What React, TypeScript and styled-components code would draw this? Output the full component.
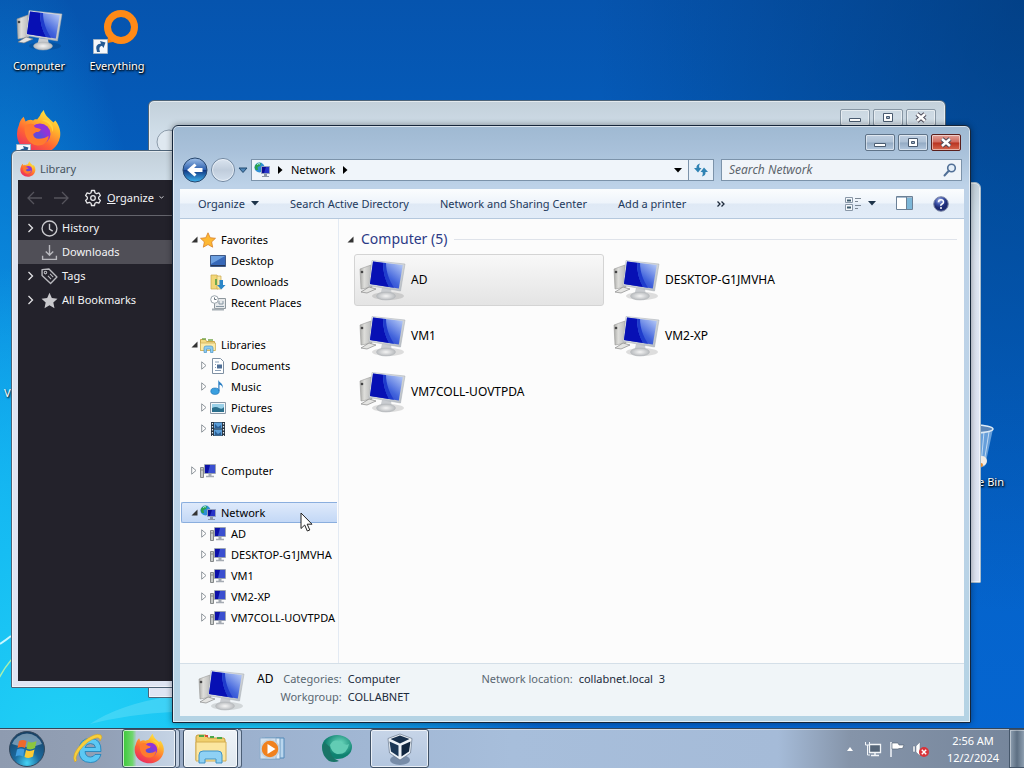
import React from "react";
import styled, { createGlobalStyle, css } from "styled-components";

const Global = createGlobalStyle`
  * { box-sizing: border-box; }
  html, body, #root { margin: 0; height: 100%; }
  body { font-family: "Noto Sans", "Open Sans", sans-serif; font-size: 12px; line-height: 16px; color: #000; overflow: hidden; }
  button { font: inherit; color: inherit; border: 0; background: none; padding: 0; }
  svg { display: block; flex: none; }
  ul, dl { margin: 0; padding: 0; list-style: none; }
`;

/* ---------- desktop ---------- */

const Screen = styled.main`
  display: flex;
  flex-direction: column;
  height: 100%;
  background:
    radial-gradient(ellipse 46% 66% at 7% 100%, #22d3f6 0%, #16bdf3 45%, rgba(14, 140, 230, 0) 100%),
    radial-gradient(ellipse 16% 75% at 0% 68%, #0ea4ee 0%, rgba(14, 140, 230, 0) 100%),
    radial-gradient(ellipse 42% 80% at 100% 0%, rgba(0, 52, 110, 0.6) 0%, rgba(0, 50, 120, 0) 100%),
    linear-gradient(180deg, #0654ae 0%, #045ebe 24%, #0462c8 60%, #0566d2 100%);
`;

const Canvas = styled.section`
  position: relative;
  flex: 1;
  min-height: 0;
  overflow: hidden;
`;

const Wallpaper = styled.svg`
  position: absolute;
  left: 0;
  bottom: 0;
`;

const Shortcuts = styled.div`
  display: grid;
  grid-template-columns: 78px 78px;
  grid-auto-rows: 100px;
`;

const Shortcut = styled.button`
  display: flex;
  flex-direction: column;
  align-items: center;
  padding-top: 6px;
  gap: 4px;
  color: #fff;
  font-size: 11px;
  text-shadow: 1px 1px 2px #000, 0 1px 2px #000;
`;

const BinSpot = styled.div`
  position: absolute;
  right: 4px;
  top: 414px;
  display: grid;
  width: 90px;
`;

const EdgeLabel = styled.span`
  position: absolute;
  left: 4px;
  top: 385px;
  color: #fff;
  font-size: 11px;
  text-shadow: 1px 1px 2px #000;
`;

/* ---------- windows ---------- */

const Window = styled.section<{ $active?: boolean }>`
  position: absolute;
  display: flex;
  flex-direction: column;
  border: 1px solid ${(p) => (p.$active ? "#16263a" : "#4d6377")};
  border-radius: 6px 6px 1px 1px;
  background: ${(p) =>
    p.$active
      ? "linear-gradient(180deg, #9fb9d2 0, #a9c1da 26px, #bdd2e8 60px, #bcd3e8 60%, #b4d3e4 100%)"
      : "linear-gradient(180deg, #c3d0da 0, #cfdde8 30px, #dde4f1 80px, #dfe5f3 100%)"};
  box-shadow: inset 0 0 0 1px rgba(255, 255, 255, 0.55);
`;

const BackWindow = styled(Window)`
  left: 148px;
  right: 78px;
  top: 100px;
  bottom: 30px;
`;

const SideWindow = styled(Window)`
  left: 320px;
  right: 43px;
  top: 182px;
  bottom: 145px;
  border-color: #a9bccb;
`;

const LibraryWindow = styled(Window)`
  left: 11px;
  right: 420px;
  top: 150px;
  bottom: 40px;
  padding: 0 6px 6px;
`;

const ExplorerWindow = styled(Window)`
  left: 172px;
  right: 53px;
  top: 125px;
  bottom: 5px;
  padding: 0 6px 6px 7px;
  box-shadow: inset 0 0 0 1px rgba(255, 255, 255, 0.6), 0 0 6px rgba(0, 0, 0, 0.4);
`;

const Captions = styled.div<{ $dim?: boolean }>`
  display: flex;
  justify-content: flex-end;
  gap: 3px;
  padding: 8px ${(p) => (p.$dim ? 9 : 3)}px 0 0;
`;

const CaptionButton = styled.button<{ $close?: boolean; $dim?: boolean }>`
  display: grid;
  place-items: center;
  width: 30px;
  height: 17px;
  border: 1px solid #5f7388;
  border-radius: 2px;
  box-shadow: inset 0 0 0 1px rgba(255, 255, 255, 0.5);
  background: linear-gradient(180deg, #c0d0e2 0%, #adc0d5 48%, #93aac3 52%, #b3c8df 100%);
  ${(p) =>
    p.$close &&
    css`
      border-color: #5a1f1c;
      background: linear-gradient(180deg, #e2a097 0%, #d0695c 48%, #b8321f 52%, #d6684f 100%);
    `}
  ${(p) =>
    p.$dim &&
    css`
      border-color: #8796a4;
      background: rgba(255, 255, 255, 0.1);
    `}
`;

/* ---------- library window ---------- */

const LibraryTitle = styled.h2`
  display: flex;
  align-items: center;
  gap: 4px;
  height: 29px;
  margin: 0;
  padding: 7px 2px 0;
  font-size: 11px;
  font-weight: 400;
  color: #46545f;
`;

const LibraryBody = styled.div`
  flex: 1;
  background: #23222b;
  color: #f4f4f6;
  font-size: 11px;
`;

const LibraryBar = styled.div`
  display: flex;
  align-items: center;
  gap: 8px;
  height: 36px;
  padding: 0 8px;
  border-bottom: 1px solid #64646c;
`;

const OrganizeButton = styled.button`
  display: flex;
  align-items: center;
  gap: 5px;
  margin-left: 6px;
`;

const LibraryRow = styled.li<{ $selected?: boolean }>`
  display: flex;
  align-items: center;
  gap: 4px;
  height: 24px;
  padding-left: 8px;
  background: ${(p) => (p.$selected ? "#504f57" : "transparent")};
`;

const LibraryToggle = styled.span`
  width: 11px;
`;

/* ---------- explorer ---------- */

const AddressRow = styled.div`
  display: flex;
  align-items: center;
  height: 24px;
  margin: 7px 2px 7px 0;
`;

const NavCluster = styled.div`
  display: flex;
  align-items: center;
  gap: 2px;
  width: 71px;
  padding-left: 2px;
`;

const AddressBox = styled.div`
  display: flex;
  align-items: center;
  flex: 1;
  height: 22px;
  padding-left: 2px;
  background: #f0f5fa;
  border: 1px solid #7c93aa;
  font-size: 11px;
`;

const Crumb = styled.button`
  display: flex;
  align-items: center;
  gap: 8px;
  padding-left: 8px;
`;

const AddressDrop = styled.button`
  display: grid;
  place-items: center;
  width: 20px;
  height: 20px;
  margin-left: auto;
`;

const RefreshButton = styled.button`
  display: grid;
  place-items: center;
  width: 25px;
  height: 22px;
  border: 1px solid #7c93aa;
  border-left: 0;
  background: #e7f0f9;
`;

const SearchBox = styled.label`
  display: flex;
  align-items: center;
  width: 241px;
  height: 22px;
  margin-left: 7px;
  padding: 0 4px 0 7px;
  border: 1px solid #7c93aa;
  background: #f0f4f9;
`;

const SearchInput = styled.input`
  flex: 1;
  min-width: 0;
  border: 0;
  padding: 0;
  background: none;
  font: italic 12px/16px "Noto Sans", "Open Sans", sans-serif;
  &::placeholder { color: #5c646c; opacity: 1; }
`;

const Toolbar = styled.div`
  display: flex;
  align-items: center;
  gap: 31px;
  height: 30px;
  padding: 0 15px 0 18px;
  font-size: 11px;
  color: #1e395b;
  background: linear-gradient(180deg, #fbfdfe 0%, #eef4fb 48%, #dfe9f5 52%, #e2ecf8 100%);
  border-bottom: 1px solid #b5c8dd;
`;

const ToolButton = styled.button`
  display: flex;
  align-items: center;
  gap: 6px;
  white-space: nowrap;
`;

const ToolIcons = styled.div`
  display: flex;
  align-items: center;
  gap: 20px;
  margin-left: auto;
`;

const Panes = styled.div`
  display: flex;
  flex: 1;
  min-height: 0;
  background: #fcfcfc;
`;

const Tree = styled.nav`
  display: flex;
  flex-direction: column;
  gap: 21px;
  width: 159px;
  padding: 10px 1px 0;
  border-right: 1px solid #e3eaf3;
  font-size: 11px;
  overflow: hidden;
`;

const TreeRow = styled.li<{ $level?: number; $selected?: boolean }>`
  display: flex;
  align-items: center;
  gap: 4px;
  height: 21px;
  padding-left: ${(p) => (p.$level ? 18 : 8)}px;
  white-space: nowrap;
  border: 1px solid transparent;
  ${(p) =>
    p.$selected &&
    css`
      border-color: #8aaede;
      border-right: 0;
      border-radius: 2px 0 0 2px;
      background: linear-gradient(180deg, #dfeafb 0%, #c3d8f6 100%);
    `}
`;

const TreeToggle = styled.span`
  display: grid;
  place-items: center;
  flex: none;
  width: 8px;
  margin-right: -2px;
`;

const TreeLabel = styled.span`
  padding-left: 1px;
`;

const Files = styled.div`
  flex: 1;
  min-width: 0;
  padding: 10px 7px 0 8px;
`;

const GroupHeader = styled.h3`
  display: flex;
  align-items: center;
  gap: 7px;
  height: 20px;
  margin: 0 0 5px;
  font-size: 14px;
  font-weight: 400;
  color: #2b3a86;
  &::after {
    content: "";
    flex: 1;
    height: 1px;
    background: #dfe3ea;
  }
`;

const Tiles = styled.ul`
  display: grid;
  grid-template-columns: repeat(auto-fill, 250px);
  gap: 4px;
  padding-left: 7px;
`;

const Tile = styled.li<{ $selected?: boolean }>`
  display: flex;
  align-items: center;
  gap: 5px;
  height: 52px;
  padding-left: 3px;
  border: 1px solid transparent;
  border-radius: 3px;
  ${(p) =>
    p.$selected &&
    css`
      border-color: #d4d4d4;
      background: linear-gradient(180deg, #f8f8f8 0%, #e4e4e4 100%);
    `}
`;

const Details = styled.footer`
  display: flex;
  gap: 12px;
  height: 53px;
  padding: 2px 17px;
  border-top: 1px solid #d4dfe8;
  background: #f0f5f8;
  color: #5a6772;
`;

const DetailsName = styled.strong`
  padding-top: 5px;
  font-weight: 400;
  color: #000;
`;

const Facts = styled.dl<{ $wide?: boolean }>`
  display: grid;
  grid-template-columns: auto auto;
  grid-auto-rows: 18px;
  align-content: start;
  column-gap: 6px;
  padding-top: 4px;
  margin-left: ${(p) => (p.$wide ? 60 : -5)}px;
  font-size: 11px;
  line-height: 18px;
  white-space: nowrap;
`;

const Term = styled.dt`
  text-align: right;
`;

const Value = styled.dd`
  margin: 0;
  color: #1b2a3b;
  white-space: pre;
`;

const Pointer = styled.svg`
  position: absolute;
  left: 127px;
  top: 386px;
`;

/* ---------- taskbar ---------- */

const Taskbar = styled.footer`
  display: flex;
  align-items: stretch;
  height: 40px;
  border-top: 1px solid #34465a;
  box-shadow: inset 0 1px 0 rgba(255, 255, 255, 0.45);
  background: linear-gradient(90deg, #8e9bb0 0%, #929fb4 9%, #9bb0cd 22%, #a7bedb 50%, #a5bbd8 76%, #8594a9 83%, #75859b 100%);
`;

const TaskButton = styled.button<{ $w: number; $state?: "open" | "active" | "progress" }>`
  display: grid;
  place-items: center;
  width: ${(p) => p.$w}px;
  ${(p) =>
    p.$state &&
    css`
      border: 1px solid #3f5166;
      border-radius: 3px;
      box-shadow: inset 0 0 0 1px rgba(255, 255, 255, 0.7);
      background: ${p.$state === "progress"
        ? "linear-gradient(90deg, #3cc83a 0%, #6fd66c 18%, #b9c9dc 26%, #c5d3e4 100%)"
        : p.$state === "active"
          ? "linear-gradient(180deg, #eef3f7 0%, #dfe8f0 100%)"
          : "linear-gradient(180deg, #c7d5e8 0%, #b3c6df 100%)"};
    `}
`;

const StackEdge = styled.span<{ $gap?: number }>`
  width: 4px;
  margin-right: ${(p) => p.$gap || 0}px;
  border: 1px solid #4c5f76;
  border-left: 0;
  border-radius: 0 3px 3px 0;
  background: #c0cee0;
`;

const Tray = styled.div`
  display: flex;
  align-items: center;
  gap: 7px;
  margin-left: auto;
`;

const Clock = styled.time`
  width: 72px;
  text-align: center;
  font-size: 11px;
  line-height: 17px;
  color: #fff;
`;

const ShowDesktop = styled.button`
  width: 15px;
  align-self: stretch;
  border: 1px solid #45566a;
  border-right: 0;
  background: linear-gradient(90deg, #8fa0b2, #5d6f83 50%, #8e9fb0);
  box-shadow: inset 1px 1px 0 rgba(255, 255, 255, 0.4);
`;

/* ---------- drawings ---------- */

const PcIcon = ({ size = 48 }: { size?: number }) => (
  <svg width={size} height={size} viewBox="0 0 48 48" aria-hidden="true">
    <defs>
      <linearGradient id="pcTower" x1="0" x2="1"><stop offset="0" stopColor="#a9a9a6" /><stop offset=".35" stopColor="#dededb" /><stop offset="1" stopColor="#b7b8b8" /></linearGradient>
      <linearGradient id="pcBezel" x1="0" y1="0" x2="1" y2="1"><stop offset="0" stopColor="#f1f2f2" /><stop offset="1" stopColor="#b6bcc2" /></linearGradient>
      <linearGradient id="pcScreen" x1="0" y1="1" x2="1" y2="0"><stop offset="0" stopColor="#1220b8" /><stop offset=".5" stopColor="#4264dc" /><stop offset="1" stopColor="#c3d6fa" /></linearGradient>
      <radialGradient id="pcBase"><stop offset="0" stopColor="#f5f5f5" /><stop offset="1" stopColor="#b8bbbe" /></radialGradient>
    </defs>
    <ellipse cx="30" cy="40" rx="16" ry="4" fill="#000" opacity=".12" />
    <path d="M2 13 13 9 14 31 3 33Z" fill="url(#pcTower)" stroke="#9b9b98" strokeWidth=".6" />
    <circle cx="4" cy="16" r="1.300" fill="#444" />
    <path d="M3 36 11 31 18 33 9 37Z" fill="#e4e4e2" stroke="#777" strokeWidth=".6" />
    <path d="M24 32 33 33 34 40 22 40Z" fill="#c9ccd0" />
    <ellipse cx="28" cy="40" rx="9.500" ry="4" fill="url(#pcBase)" stroke="#aeb2b6" strokeWidth=".5" />
    <path d="M14 4.500 47 8 42.500 35 11 29.500Z" fill="url(#pcBezel)" stroke="#a5abb2" strokeWidth=".5" />
    <path d="M15 5.500 44.800 9 40.800 32.500 12 28Z" fill="url(#pcScreen)" />
    <path d="M15 5.500 25 6.700C25 16 27 24 31 31L12 28Z" fill="#0710b4" />
    <path d="M25 6.700 28 7.100C28 16 31.500 25 36 31.800L31 31C27 24 25 16 25 6.700Z" fill="#1f3ccc" />
  </svg>
);

const SmallPc = () => (
  <svg width="16" height="16" viewBox="0 0 16 16" aria-hidden="true">
    <path d="M.5 4.500h3v10h-3z" fill="#c8cbc9" stroke="#85898a" />
    <path d="M1.500 7h1" stroke="#444" />
    <path d="M4.500 1.500h11v9h-11z" fill="#cdd3e4" stroke="#9aa2b2" />
    <path d="M5 2h10v8H5z" fill="#3a4fd0" /><path d="M5 2h5L8 10H5z" fill="#0c10a8" />
    <path d="M8.500 11h3v2h-3z" fill="#a5abb3" /><path d="M6 13.500h8" stroke="#a5abb3" strokeWidth="1.500" />
  </svg>
);

const NetworkIcon = () => (
  <svg width="16" height="16" viewBox="0 0 16 16" overflow="visible" aria-hidden="true">
    <circle cx="5.500" cy="5.500" r="5" fill="#2d8fd4" />
    <path d="M2 2.500Q5-.5 7 1.500L6 4 3.500 5 4 8 2 8Q-.5 5 2 2.500M7 6l3-1v4L7 10z" fill="#2ba24a" />
    <path d="M3 2.500Q5 1 6 2" stroke="#bff0ff" fill="none" />
    <path d="M7.500 4.500h8v7h-8z" fill="#2734c8" stroke="#93a0bd" /><path d="M8 5h4l-2 6H8z" fill="#0a0c94" />
    <path d="M10 12h3v2h-3z" fill="#8c97a8" /><path d="M8 14.500h7" stroke="#8c97a8" />
  </svg>
);

const FirefoxIcon = ({ size }: { size: number }) => (
  <svg width={size} height={size} viewBox="0 0 48 48" aria-hidden="true">
    <defs>
      <linearGradient id="foxBody" x1=".8" y1="0" x2=".2" y2="1"><stop offset="0" stopColor="#fff04a" /><stop offset=".3" stopColor="#ffb52c" /><stop offset=".62" stopColor="#ff6434" /><stop offset="1" stopColor="#e82468" /></linearGradient>
      <radialGradient id="foxGlobe" cx=".4" cy=".7"><stop offset="0" stopColor="#4b55dc" /><stop offset="1" stopColor="#9233d8" /></radialGradient>
    </defs>
    <path d="M3 17C4 12 6 10 8 8L10 13Q14 10 18 12C20 10 22 11 22 11L25 7C26 4 28 2 29 1C30 7 35 10 39 14L41 12C45 17 47 23 46 29C44 40 35 47 24 47C11 47 1 38 1 26Q1 21 3 17Z" fill="url(#foxBody)" />
    <circle cx="25" cy="26" r="11" fill="url(#foxGlobe)" />
    <path d="M9 18Q13 14 19 16C18 18 20 20 23 20L26 21Q25 24 21 24L18 26Q18 31 24 31Q30 31 34 28C34 34 29 39 22 38C13 37 8 28 9 18Z" fill="#ff7a2f" />
    <path d="M27 12Q37 14 38 24Q40 20 37 15Q33 10 27 12Z" fill="#ffd33c" />
  </svg>
);

const ShortcutArrow = () => (
  <>
    <path d="M.5.500h14v14H.5z" fill="#f6f8fb" stroke="#9fb2c6" />
    <path d="M4 13Q1 5 8 4.500L7 2 12.500 3.500 10.500 9 9 6.800Q5 7.500 7 13Z" fill="#245a94" />
  </>
);

const EverythingIcon = () => (
  <svg width="60" height="48" viewBox="0 0 60 48" aria-hidden="true">
    <path d="M22 25 20 37 32 35Z" fill="#f47f10" />
    <circle cx="34" cy="21" r="13.500" fill="none" stroke="#ff8a17" strokeWidth="7" />
    <g transform="translate(6 33)"><ShortcutArrow /></g>
  </svg>
);

const FirefoxShortcut = () => (
  <svg width="50" height="50" viewBox="0 0 50 50" aria-hidden="true">
    <g transform="translate(2 3)"><FirefoxIcon size={46} /></g>
    <g transform="translate(2 38)"><ShortcutArrow /></g>
  </svg>
);

const BinIcon = () => (
  <svg width="48" height="50" viewBox="0 0 48 50" aria-hidden="true">
    <path d="M6 9 12 46Q24 51 34 46L42 9Z" fill="#a9cdf0" opacity=".6" />
    <path d="M33 12 30 45M38 12 33 43" stroke="#e8f4ff" opacity=".7" />
    <ellipse cx="24" cy="9" rx="18" ry="4" fill="#5b86b8" stroke="#dceaf6" strokeWidth="1.500" />
    <circle cx="31" cy="41" r="5" fill="#f1ebe4" /><circle cx="30" cy="45" r="2" fill="#e58b2f" />
  </svg>
);

const MinGlyph = () => <svg width="14" height="10" viewBox="0 0 14 10"><path d="M1.500 5.500h11v3h-11z" fill="#fff" stroke="#4a5b70" /></svg>;
const MaxGlyph = () => <svg width="12" height="10" viewBox="0 0 12 10"><path d="M1.500.5h9v8h-9z" fill="#fff" stroke="#4a5b70" /><path d="M4.500 3.500h3v2h-3z" fill="#9fb2c8" stroke="#4a5b70" /></svg>;
const CloseGlyph = () => <svg width="14" height="11" viewBox="0 0 14 11"><path d="M3 2 11 9M11 2 3 9" stroke="#4d4a58" strokeWidth="4.500" /><path d="M3 2 11 9M11 2 3 9" stroke="#fff" strokeWidth="2.500" /></svg>;

const Down = ({ fill = "#1d3349" }: { fill?: string }) => <svg width="8" height="5" viewBox="0 0 8 5"><path d="M0 0h8L4 4.500z" fill={fill} /></svg>;
const Right = () => <svg width="5" height="8" viewBox="0 0 5 8"><path d="M0 0v8l4.500-4z" fill="#000" /></svg>;
const Expanded = () => <svg width="7" height="7" viewBox="0 0 7 7"><path d="M6.500.5v6h-6z" fill="#333" /></svg>;
const Collapsed = () => <svg width="6" height="9" viewBox="0 0 6 9"><path d="M.7.8v7.400l4.300-3.700z" fill="#fff" stroke="#8f969c" /></svg>;

const treeIcons: Record<string, React.ReactNode> = {
  star: <path d="M8 .8l2.200 4.900 5.300.6-3.900 3.600 1.100 5.300L8 12.500l-4.700 2.700 1.100-5.300L.5 6.300l5.300-.6z" fill="#fdb833" stroke="#d9822b" strokeWidth=".8" />,
  desktop: <><path d="M.5 2.500h15v11H.5z" fill="#3768b8" stroke="#405a86" /><path d="M1 3h14L1 11z" fill="#6da0e0" /><path d="M1 12.500h14" stroke="#24365a" /></>,
  downloads: <><path d="M1 1h6l1 2v12H1z" fill="#f2d778" stroke="#cba64a" strokeWidth=".7" /><path d="M7 2h4v13H7z" fill="#f9e9a5" stroke="#cba64a" strokeWidth=".7" /><path d="M9.500 6h3.500v5h2.500L11.300 15.500 7 11h2.500z" fill="#2b86c8" /><path d="M5 5h2v6H5z" fill="#6fa84c" /></>,
  recent: <><path d="M4.500 3.500h11v10h-11z" fill="#e6e9eb" stroke="#8d969c" /><path d="M6 11.500h8M9 6v3h4V6" stroke="#8797a3" fill="none" /><circle cx="4.500" cy="4.500" r="3.800" fill="#fff" stroke="#9aa4ab" /><path d="M4.500 2.500v2h2" stroke="#66727c" fill="none" /><path d="M2 14.500h12" stroke="#a4adb3" strokeWidth="2" /></>,
  libraries: <><path d="M.5 2.500h5l1 2h8v9H.5z" fill="#f3da82" stroke="#c9a74c" /><path d="M2 2h4M8 3h5" stroke="#77a850" strokeWidth="1.500" /><path d="M.5 6h15v7.500H.5z" fill="#fbeaa8" stroke="#d2b25a" strokeWidth=".8" /><path d="M4 15.500V11Q4 9 6 9h5q2 0 2 2v4.500h-2.500V12h-4v3.500z" fill="#8ecbf0" stroke="#4b96c8" strokeWidth=".7" /></>,
  documents: <><path d="M2.500.5h8l3 3v12h-11z" fill="#fff" stroke="#7f90a3" /><path d="M5 4h4M5 12.500h6" stroke="#8aa0b8" /><path d="M7 6.500h5v4H7z" fill="#4f6f96" /><path d="M5 6.500h1M5 9.500h1" stroke="#8aa0b8" /></>,
  music: <><ellipse cx="5" cy="12.200" rx="4.200" ry="3.200" fill="#3a9fdf" stroke="#1d6fb0" strokeWidth=".6" /><path d="M8.300 12V.8C9 4 14 4 12.500 9.500 12.500 7 11 6 9.500 5.800V12z" fill="#2b7fc4" /></>,
  pictures: <><path d="M.5 2.500h15v11H.5z" fill="#f4f7fa" stroke="#8c9aa8" /><path d="M2 4h12v8H2z" fill="#9ad0e8" /><path d="M2 8q4-2 7 0t5-1v5H2z" fill="#2b6f8c" /></>,
  videos: <><path d="M1 1h14v14H1z" fill="#26323f" /><path d="M4 1.500h8v6H4zM4 8.500h8v6H4z" fill="#5b9ed8" /><path d="M5 3l3 3 3-2v3H5zM5 10l3 3 3-2v3H5z" fill="#2d5f94" /><path d="M2.500 2v13M13.500 2v13" stroke="#e8edf2" strokeWidth="1.200" strokeDasharray="1.500 1.500" /></>,
};

const TreeIcon = ({ name }: { name: string }) =>
  name === "pc" ? <SmallPc /> : name === "network" ? <NetworkIcon /> : <svg width="16" height="16" viewBox="0 0 16 16" aria-hidden="true">{treeIcons[name]}</svg>;

/* ---------- data ---------- */

type Node = { label: string; icon: string; toggle?: "open" | "closed"; level?: number; selected?: boolean };

const computers = ["AD", "DESKTOP-G1JMVHA", "VM1", "VM2-XP", "VM7COLL-UOVTPDA"];

const tree: Node[][] = [
  [
    { label: "Favorites", icon: "star", toggle: "open" },
    { label: "Desktop", icon: "desktop", level: 1 },
    { label: "Downloads", icon: "downloads", level: 1 },
    { label: "Recent Places", icon: "recent", level: 1 },
  ],
  [
    { label: "Libraries", icon: "libraries", toggle: "open" },
    { label: "Documents", icon: "documents", toggle: "closed", level: 1 },
    { label: "Music", icon: "music", toggle: "closed", level: 1 },
    { label: "Pictures", icon: "pictures", toggle: "closed", level: 1 },
    { label: "Videos", icon: "videos", toggle: "closed", level: 1 },
  ],
  [{ label: "Computer", icon: "pc", toggle: "closed" }],
  [
    { label: "Network", icon: "network", toggle: "open", selected: true },
    ...computers.map((label): Node => ({ label, icon: "pc", toggle: "closed", level: 1 })),
  ],
];

const libraryItems = [
  {
    label: "History",
    art: <><circle cx="8" cy="8" r="7" fill="none" stroke="#c9c9cd" strokeWidth="1.300" /><path d="M8 3.500V8.500L11 10.500" fill="none" stroke="#c9c9cd" strokeWidth="1.300" /></>,
  },
  {
    label: "Downloads",
    selected: true,
    art: <path d="M8 1V10.500M4.500 7 8 10.500 11.500 7M1.500 11V14.500H14.500V11" fill="none" stroke="#b9b9be" strokeWidth="1.300" />,
  },
  {
    label: "Tags",
    art: <><path d="M1 1.500 7.500 1 15 8.500 9 14.500 1 7Z" fill="none" stroke="#b9b9be" strokeWidth="1.300" strokeLinejoin="round" /><circle cx="4.200" cy="4.300" r="1.200" fill="none" stroke="#b9b9be" /><path d="M6.500 7.500l3 3M8.500 5.500l3 3" stroke="#b9b9be" /></>,
  },
  {
    label: "All Bookmarks",
    art: <path d="M8 .8l2.200 4.900 5.300.6-3.900 3.600 1.100 5.300L8 12.500l-4.700 2.700 1.100-5.300L.5 6.300l5.300-.6z" fill="#c9c9cd" />,
  },
];

const WindowButtons = ({ dim }: { dim?: boolean }) => (
  <Captions $dim={dim}>
    <CaptionButton $dim={dim} aria-label="Minimize"><MinGlyph /></CaptionButton>
    <CaptionButton $dim={dim} aria-label="Maximize"><MaxGlyph /></CaptionButton>
    <CaptionButton $dim={dim} $close={!dim} aria-label="Close"><CloseGlyph /></CaptionButton>
  </Captions>
);

const Library = () => (
  <LibraryWindow>
    <LibraryTitle><FirefoxIcon size={16} />Library</LibraryTitle>
    <LibraryBody>
      <LibraryBar>
        <button aria-label="Back"><svg width="18" height="14" viewBox="0 0 18 14"><path d="M16 7H2M8 1 2 7l6 6" fill="none" stroke="#55545c" strokeWidth="1.300" /></svg></button>
        <button aria-label="Forward"><svg width="18" height="14" viewBox="0 0 18 14"><path d="M2 7h14M10 1l6 6-6 6" fill="none" stroke="#55545c" strokeWidth="1.300" /></svg></button>
        <OrganizeButton>
          <svg width="18" height="18" viewBox="0 0 18 18"><path d="M7.500 1.500h3l.5 2.300 1.600.9 2.300-.8 1.500 2.600-1.700 1.600v1.800l1.700 1.600-1.500 2.600-2.300-.8-1.600.9-.5 2.300h-3L7 14.200l-1.600-.9-2.300.8-1.500-2.600 1.700-1.600V8.100L1.600 6.500l1.500-2.600 2.300.8L7 3.800z" fill="none" stroke="#e8e8ea" strokeWidth="1.300" strokeLinejoin="round" /><circle cx="9" cy="9" r="2.300" fill="none" stroke="#e8e8ea" strokeWidth="1.300" /></svg>
          <span><u>O</u>rganize</span>
          <svg width="5" height="3" viewBox="0 0 5 3"><path d="M.5.5 2.500 2 4.500.5" fill="none" stroke="#c9c9cd" /></svg>
        </OrganizeButton>
      </LibraryBar>
      <ul>
        {libraryItems.map((item) => (
          <LibraryRow key={item.label} $selected={item.selected}>
            <LibraryToggle>{!item.selected && <svg width="9" height="10" viewBox="0 0 9 10"><path d="M2.500 1 6.500 5l-4 4" fill="none" stroke="#e2e2e5" strokeWidth="1.300" /></svg>}</LibraryToggle>
            <svg width="17" height="17" viewBox="0 0 16 16" aria-hidden="true">{item.art}</svg>
            {item.label}
          </LibraryRow>
        ))}
      </ul>
    </LibraryBody>
  </LibraryWindow>
);

const Explorer = () => (
  <ExplorerWindow $active>
    <WindowButtons />
    <AddressRow>
      <NavCluster>
        <button aria-label="Back">
          <svg width="26" height="26" viewBox="0 0 26 26">
            <defs><linearGradient id="navBack" x1="0" y1="0" x2="0" y2="1"><stop offset="0" stopColor="#9fc0e8" /><stop offset=".48" stopColor="#2f62b0" /><stop offset=".52" stopColor="#123a86" /><stop offset="1" stopColor="#3fb4ee" /></linearGradient></defs>
            <circle cx="13" cy="13" r="12" fill="url(#navBack)" stroke="#26466e" />
            <path d="M5 13 12.500 6.500 14.500 8.500 12 11H20.500V15H12L14.500 17.500 12.500 19.500Z" fill="#fff" />
          </svg>
        </button>
        <button aria-label="Forward">
          <svg width="26" height="26" viewBox="0 0 26 26">
            <defs><linearGradient id="navNext" x1="0" y1="0" x2="0" y2="1"><stop offset="0" stopColor="#dbe5f0" /><stop offset=".5" stopColor="#c0cddc" /><stop offset="1" stopColor="#d3dfed" /></linearGradient></defs>
            <circle cx="13" cy="13" r="11.500" fill="url(#navNext)" stroke="#6f859e" />
            <circle cx="13" cy="13" r="10.500" fill="none" stroke="#eef4fa" opacity=".7" />
          </svg>
        </button>
        <button aria-label="Recent pages"><svg width="10" height="7" viewBox="0 0 10 7"><path d="M1 1h8L5 5.500z" fill="#4f86b8" stroke="#20496f" /></svg></button>
      </NavCluster>
      <AddressBox>
        <NetworkIcon />
        <Crumb><Right />Network</Crumb>
        <Crumb aria-label="Show computers"><Right /></Crumb>
        <AddressDrop aria-label="Previous locations"><Down fill="#000" /></AddressDrop>
      </AddressBox>
      <RefreshButton aria-label="Refresh">
        <svg width="14" height="14" viewBox="0 0 14 14"><path d="M6 .5Q2 1.500 2.500 5H0L4 9.500 7.500 5H5.500Q4.500 2.500 6 .5M8 13.500Q12 12.500 11.500 9H14L10 4.500 6.500 9H8.500Q9.500 11.500 8 13.500" fill="#2f83b4" /></svg>
      </RefreshButton>
      <SearchBox>
        <SearchInput type="text" placeholder="Search Network" aria-label="Search Network" />
        <svg width="14" height="14" viewBox="0 0 14 14"><circle cx="8.500" cy="5" r="3.800" fill="#e4eef8" stroke="#516f96" strokeWidth="1.600" /><path d="M5.800 7.800 1.500 12.500" stroke="#516f96" strokeWidth="2" strokeLinecap="round" /></svg>
      </SearchBox>
    </AddressRow>
    <Toolbar>
      <ToolButton>Organize <Down /></ToolButton>
      <ToolButton>Search Active Directory</ToolButton>
      <ToolButton>Network and Sharing Center</ToolButton>
      <ToolButton>Add a printer</ToolButton>
      <ToolButton aria-label="More commands"><svg width="8" height="6" viewBox="0 0 8 6"><path d="M.5.500 3 3 .5 5.500M4.500.5 7 3 4.500 5.500" fill="none" stroke="#1e2a3b" strokeWidth="1.300" /></svg></ToolButton>
      <ToolIcons>
        <ToolButton aria-label="Change your view">
          <svg width="18" height="16" viewBox="0 0 18 16"><path d="M1.500 1.500h7v5h-7zM1.500 8.500h7v6h-7z" fill="#f4f7fa" stroke="#8a98a8" /><path d="M3 4.500h4M3 11.500h4" stroke="#3c5a6c" strokeWidth="2" /><path d="M11 2.500h6M11 5.500h3M11 9.500h6M11 12.500h3" stroke="#7b8794" /></svg>
          <Down />
        </ToolButton>
        <ToolButton aria-label="Show the preview pane">
          <svg width="17" height="15" viewBox="0 0 17 15"><path d="M.5.500h16v13H.5z" fill="#fff" stroke="#6b8096" /><path d="M11 2h5v11h-5z" fill="#7db7d8" /><path d="M1 1.500h15" stroke="#a8bccf" /><path d="M10.500 1v12" stroke="#6b8096" /></svg>
        </ToolButton>
        <ToolButton aria-label="Get help">
          <svg width="16" height="16" viewBox="0 0 16 16"><defs><radialGradient id="helpBall" cx=".4" cy=".25"><stop offset="0" stopColor="#a7b7e8" /><stop offset=".6" stopColor="#3a4fa6" /><stop offset="1" stopColor="#1d2a72" /></radialGradient></defs><circle cx="8" cy="8" r="7.300" fill="url(#helpBall)" stroke="#7f8aa8" /><path d="M5.500 6.200Q5.700 3.800 8 3.800T10.500 6Q10.500 7.200 9 8T8 9.800" fill="none" stroke="#fff" strokeWidth="1.600" /><circle cx="8" cy="12" r="1" fill="#fff" /></svg>
        </ToolButton>
      </ToolIcons>
    </Toolbar>
    <Panes>
      <Tree aria-label="Folders">
        {tree.map((group) => (
          <ul key={group[0].label}>
            {group.map((node) => (
              <TreeRow key={node.label} $level={node.level} $selected={node.selected}>
                <TreeToggle>{node.toggle === "open" ? <Expanded /> : node.toggle === "closed" ? <Collapsed /> : null}</TreeToggle>
                <TreeIcon name={node.icon} />
                <TreeLabel>{node.label}</TreeLabel>
              </TreeRow>
            ))}
          </ul>
        ))}
      </Tree>
      <Files>
        <GroupHeader><Expanded />Computer (5)</GroupHeader>
        <Tiles>
          {computers.map((name, i) => (
            <Tile key={name} $selected={i === 0}><PcIcon />{name}</Tile>
          ))}
        </Tiles>
      </Files>
    </Panes>
    <Details>
      <PcIcon />
      <DetailsName>AD</DetailsName>
      <Facts>
        <Term>Categories:</Term><Value>Computer</Value>
        <Term>Workgroup:</Term><Value>COLLABNET</Value>
      </Facts>
      <Facts $wide>
        <Term>Network location:</Term><Value>collabnet.local  3</Value>
      </Facts>
    </Details>
    <Pointer width="14" height="21" viewBox="0 0 14 21"><path d="M1 1V16.500L4.700 13 7.300 19 9.800 18 7.200 12.200H12Z" fill="#fff" stroke="#222" /></Pointer>
  </ExplorerWindow>
);

const App = () => (
  <>
    <Global />
    <Screen>
      <Canvas>
        <Wallpaper width="200" height="120" viewBox="0 0 200 120" aria-hidden="true">
          <path d="M0 36Q6 32 11 28" stroke="#c8f6ff" strokeWidth="2" fill="none" />
          <path d="M-2 72Q8 52 24 40" stroke="#a6f0b0" strokeWidth="1.500" fill="none" />
          <path d="M90 116Q120 96 172 88V104Q130 106 90 116Z" fill="#7fe6fa" opacity=".35" />
        </Wallpaper>
        <Shortcuts>
          <Shortcut><PcIcon />Computer</Shortcut>
          <Shortcut><EverythingIcon />Everything</Shortcut>
          <Shortcut aria-label="Firefox"><FirefoxShortcut /></Shortcut>
        </Shortcuts>
        <EdgeLabel>V</EdgeLabel>
        <BinSpot><Shortcut><BinIcon />Recycle Bin</Shortcut></BinSpot>
        <SideWindow />
        <BackWindow>
          <WindowButtons dim />
          <svg width="34" height="34" viewBox="0 0 34 34" aria-hidden="true"><circle cx="20" cy="16" r="12" fill="#dfe8f0" stroke="#8d9cab" /></svg>
        </BackWindow>
        <Library />
        <Explorer />
      </Canvas>
      <Taskbar>
        <TaskButton $w={54} aria-label="Start">
          <svg width="38" height="38" viewBox="0 0 38 38">
            <defs><radialGradient id="orb" cx=".5" cy=".9" r=".9"><stop offset="0" stopColor="#45d3f5" /><stop offset=".4" stopColor="#1b6a9e" /><stop offset="1" stopColor="#173f63" /></radialGradient></defs>
            <circle cx="19" cy="19" r="17.500" fill="url(#orb)" stroke="#33475c" />
            <path d="M4 14A16 16 0 0 1 34 14Q19 20 4 14Z" fill="#c8dbea" opacity=".5" />
            <path d="M11 11Q15 9 18.500 11L17 18Q13.500 16 9.500 18Z" fill="#ee6a2c" />
            <path d="M20 11.500Q24 13.500 28.500 11L27 18Q23 20.500 18.500 18.500Z" fill="#8cc63e" />
            <path d="M9 19.500Q13 17.500 16.500 19.500L15 26.500Q11.500 24.500 7.500 26.500Z" fill="#3f9ee0" />
            <path d="M18 20Q22 22 26.500 19.500L25 26.500Q21 29 16.500 27Z" fill="#fccb34" />
          </svg>
        </TaskButton>
        <TaskButton $w={68} aria-label="Internet Explorer">
          <svg width="34" height="32" viewBox="0 0 34 32">
            <path d="M30 18.500H14Q14.500 24 19.500 24 22.500 24 24 21.500H30Q27.500 29.500 19.500 29.500 8 29.500 8 17.500 8 5.500 19.500 5.500 30.500 5.500 30 18.500ZM14 14.500H24.500Q24 10.500 19.500 10.500 15 10.500 14 14.500Z" fill="#5cc8f4" stroke="#1c7fb8" strokeWidth=".8" />
            <path d="M4 29Q-1 22 12 9 24-1 30 2 32 4 29 8 29 4 25 5 17 7 9 17 3 26 6 27Z" fill="#f8cf3c" stroke="#cf9c1b" strokeWidth=".5" />
          </svg>
        </TaskButton>
        <TaskButton $w={54} $state="progress" aria-label="Firefox"><FirefoxIcon size={31} /></TaskButton>
        <StackEdge $gap={3} />
        <TaskButton $w={55} $state="active" aria-label="File Explorer">
          <svg width="36" height="34" viewBox="0 0 36 34">
            <path d="M3 5Q3 3 5 3h8l2 3h15q2 0 2 2v20H3z" fill="#f0cf6d" stroke="#c49a3b" />
            <path d="M6 4h5M17 5h4M24 6h5" stroke="#4ca84a" strokeWidth="2" /><path d="M12 4h3" stroke="#d84b38" strokeWidth="2" />
            <path d="M3 10h30v19H3z" fill="#fbe6a0" stroke="#d5ae52" />
            <path d="M6 31V23q0-4 4-4h15q4 0 4 4v8h-6v-4H12v4z" fill="#8fd1f4" stroke="#3f93c8" />
          </svg>
        </TaskButton>
        <StackEdge />
        <TaskButton $w={60} aria-label="Media Player">
          <svg width="30" height="28" viewBox="0 0 30 28"><path d="M8 3h19v20H8z" fill="#b9d6ee" stroke="#5389b8" /><path d="M5 3h18v21H5z" fill="#e3eef7" stroke="#6f9cc2" /><path d="M3 3h16v21H3z" fill="#d2e2f0" stroke="#8caccb" /><circle cx="13" cy="14" r="9" fill="#f0811e" stroke="#c4d2de" strokeWidth="1.500" /><path d="M10.500 9v10l8-5z" fill="#fff" /></svg>
        </TaskButton>
        <TaskButton $w={68} aria-label="Messenger">
          <svg width="34" height="32" viewBox="0 0 34 32"><defs><radialGradient id="teal" cx=".6" cy=".35"><stop offset="0" stopColor="#6fdcc0" /><stop offset="1" stopColor="#0f8170" /></radialGradient></defs><ellipse cx="18" cy="14" rx="15" ry="12" fill="url(#teal)" /><path d="M5 9Q0 20 10 28 15 30 20 28 10 24 11 14Z" fill="#1a7567" /><path d="M11 12Q15 5 21 9T30 11Q28 22 18 21 12 19 11 12Z" fill="#62ccb4" /></svg>
        </TaskButton>
        <TaskButton $w={59} $state="open" aria-label="VirtualBox">
          <svg width="32" height="34" viewBox="0 0 32 34"><ellipse cx="16" cy="28" rx="10" ry="5" fill="#4c6482" opacity=".6" /><path d="M16 2 28 6.500 26.500 21 16 28 5.500 21 4 6.500Z" fill="#eef3f8" stroke="#54657a" strokeWidth=".6" /><path d="M16 3.500 25.500 7 16 11.500 6.500 7Z" fill="#17304c" /><path d="M5.500 9.500 14.500 13.500V24.500L7 19.500Z" fill="#1c3856" /><path d="M26.500 9.500 17.500 13.500V24.500L25 19.500Z" fill="#11263e" /></svg>
        </TaskButton>
        <Tray>
          <button aria-label="Show hidden icons"><svg width="14" height="6" viewBox="0 0 14 6"><path d="M4 5h6L7 1z" fill="#fff" /></svg></button>
          <svg width="18" height="18" viewBox="0 0 18 18" role="img" aria-label="Network"><path d="M5.500 4.500h11v8h-11z" fill="#566679" stroke="#f2f5f8" strokeWidth="1.300" /><path d="M11 13v2M7 15.500h8" stroke="#f2f5f8" strokeWidth="1.500" /><path d="M1.500 2v3h4V2M3.500 5v10H6" fill="none" stroke="#f2f5f8" /></svg>
          <svg width="16" height="18" viewBox="0 0 16 18" role="img" aria-label="Action Center"><path d="M2 2v15" stroke="#f2f5f8" strokeWidth="1.500" /><path d="M3 3h6l1 2h5l-1.500 3.500H10L9 9H3z" fill="#fff" stroke="#4c5b6d" strokeWidth=".6" /></svg>
          <svg width="18" height="18" viewBox="0 0 18 18" role="img" aria-label="Volume muted"><path d="M1 6h2v6H1zM4 6l4-4v14l-4-4z" fill="#fff" stroke="#68778a" strokeWidth=".5" /><circle cx="12" cy="12" r="5" fill="#d8343a" /><path d="M9.800 9.800l4.400 4.400M14.200 9.800l-4.400 4.400" stroke="#fff" strokeWidth="1.500" /></svg>
          <Clock>2:56 AM<br />12/2/2024</Clock>
        </Tray>
        <ShowDesktop aria-label="Show desktop" />
      </Taskbar>
    </Screen>
  </>
);

export default App;
